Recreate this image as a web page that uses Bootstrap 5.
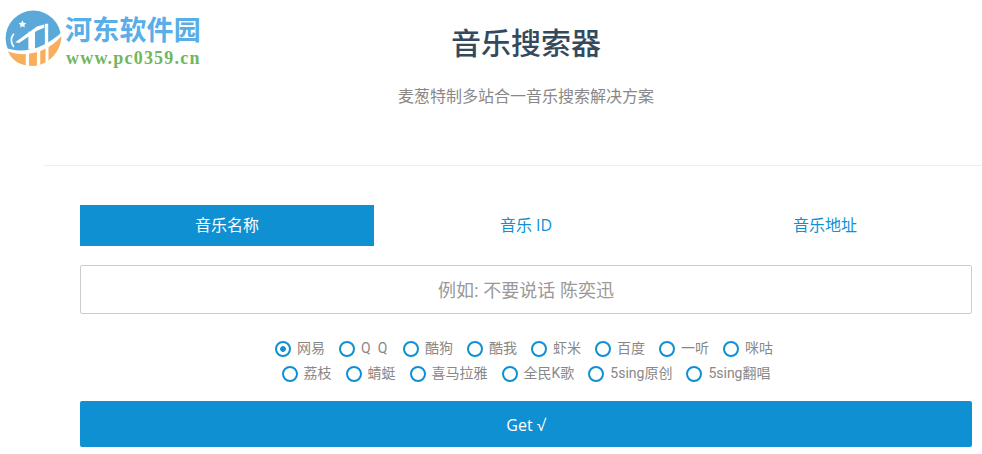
<!DOCTYPE html>
<html lang="zh-CN">
<head>
    <meta charset="UTF-8">
    <meta name="viewport" content="width=device-width, initial-scale=1.0">
    <title>音乐搜索器</title>
    <link rel="stylesheet" href="https://cdn.jsdelivr.net/npm/bootstrap@5.3.0/dist/css/bootstrap.min.css">
    <style>
        html, body {
            overflow: hidden;
        }
        body {
            font-family: "Open Sans", "Noto Sans CJK SC", sans-serif;
            color: #888;
            background: #fff;
        }
        .site-logo {
            position: absolute;
            left: 0;
            top: 6px;
            width: 210px;
            height: 66px;
        }
        .logo-mark {
            width: 66px;
            height: 66px;
        }
        .logo-name {
            position: absolute;
            left: 65px;
            top: 4px;
            font: 700 27px/38px "Noto Sans CJK SC", sans-serif;
            letter-spacing: .2px;
            color: #5aaee8;
            white-space: nowrap;
        }
        .logo-url {
            position: absolute;
            left: 66px;
            top: 41px;
            font: 700 18px/22px "Liberation Serif", serif;
            letter-spacing: 1.2px;
            color: #6fb75e;
            white-space: nowrap;
        }
        .page-wrap {
            width: 964px;
            margin-left: 44px;
        }
        .page-head {
            height: 166px;
            padding-top: 19px;
            border-bottom: 1px solid #eee;
            text-align: center;
        }
        .page-head h1 {
            font: 500 30px/44px "Noto Sans CJK SC", sans-serif;
            color: #34495e;
            margin: 0 0 20px;
        }
        .page-head p {
            font: 400 16px/24px "Noto Sans CJK SC", sans-serif;
            color: #888;
            margin: 0;
        }
        .search-box {
            padding: 39px 36px 0;
        }
        .mode-tabs {
            gap: 5px;
        }
        .mode-tabs .nav-link {
            flex: 1 1 0;
            height: 41px;
            padding: 0;
            line-height: 41px;
            font-size: 16px;
            border-radius: 0;
            color: #0f90d2;
        }
        .mode-tabs .nav-link.active {
            background: #0f90d2;
            color: #fff;
        }
        .song-input {
            height: 49px;
            margin-top: 19px;
            border: 1px solid #ccc;
            border-radius: 2px;
            font-size: 18px;
            text-align: center;
            color: #888;
        }
        .song-input::placeholder {
            color: #999;
            opacity: 1;
        }
        .source-list {
            margin-top: 22px;
            font-family: Roboto, "Noto Sans CJK SC", sans-serif;
            font-size: 14px;
            line-height: 25px;
        }
        .source-row {
            gap: 14px;
        }
        .source-item {
            gap: 6px;
            margin: 0;
            white-space: nowrap;
        }
        .qq-label {
            letter-spacing: 1.8px;
        }
        .source-radio {
            appearance: none;
            width: 16px;
            height: 16px;
            margin: 0;
            border: 2px solid #0f90d2;
            border-radius: 50%;
            background: #fff;
        }
        .source-radio:checked {
            background: radial-gradient(circle, #0f90d2 0 2.5px, #fff 3.2px);
        }
        .get-btn {
            height: 46px;
            margin-top: 15px;
            padding-top: 8px;
            border: 0;
            border-radius: 2px;
            background: #0f90d2;
            color: #fff;
            font-size: 16px;
        }
    </style>
</head>
<body>
    <!-- 水印 -->
    <div class="site-logo">
        <svg class="logo-mark" viewBox="0 0 200 200">
            <circle cx="101" cy="98" r="84" fill="#5aa9da"/>
            <path d="M10 124C60 146 130 136 192 74V200H10z" fill="#fff"/>
            <path d="M24 137C70 156 140 146 186 92 186 140 142 182 100 182 62 182 36 165 24 137z" fill="#f9ae5c"/>
            <path d="M42 84C32 96 32 110 42 124" fill="none" stroke="#fff" stroke-width="5"/>
            <path d="M46 110 112 62 134 56V66L112 75 58 112z" fill="#fff"/>
            <path d="M86 78H106V132H86zM136 54H146V128H136z" fill="#fff"/>
            <path d="M78 140H88V184H78zM112 136H122V184H112zM138 124H147V184H138z" fill="#fff"/>
            <path d="M68 44l3.500 7 8 1-5.800 5.400 1.500 7.600-7.200-3.800-7.200 3.800 1.500-7.600-5.800-5.400 8-1z" fill="#fff"/>
        </svg>
        <div class="logo-name">河东软件园</div>
        <div class="logo-url">www.pc0359.cn</div>
    </div>

    <div class="page-wrap">
        <div class="page-head">
            <h1>音乐搜索器</h1>
            <p>麦葱特制多站合一音乐搜索解决方案</p>
        </div>

        <form class="search-box">
            <ul class="nav mode-tabs text-center">
                <li class="nav-link active">音乐名称</li>
                <li class="nav-link">音乐 ID</li>
                <li class="nav-link">音乐地址</li>
            </ul>

            <input type="text" class="form-control song-input" placeholder="例如: 不要说话 陈奕迅">

            <div class="source-list">
                <div class="d-flex justify-content-center source-row pe-1">
                    <label class="d-flex align-items-center source-item"><input class="source-radio" type="radio" name="source" checked>网易</label>
                    <label class="d-flex align-items-center source-item"><input class="source-radio" type="radio" name="source"><span class="qq-label">Q Q</span></label>
                    <label class="d-flex align-items-center source-item"><input class="source-radio" type="radio" name="source">酷狗</label>
                    <label class="d-flex align-items-center source-item"><input class="source-radio" type="radio" name="source">酷我</label>
                    <label class="d-flex align-items-center source-item"><input class="source-radio" type="radio" name="source">虾米</label>
                    <label class="d-flex align-items-center source-item"><input class="source-radio" type="radio" name="source">百度</label>
                    <label class="d-flex align-items-center source-item"><input class="source-radio" type="radio" name="source">一听</label>
                    <label class="d-flex align-items-center source-item"><input class="source-radio" type="radio" name="source">咪咕</label>
                </div>
                <div class="d-flex justify-content-center source-row">
                    <label class="d-flex align-items-center source-item"><input class="source-radio" type="radio" name="source">荔枝</label>
                    <label class="d-flex align-items-center source-item"><input class="source-radio" type="radio" name="source">蜻蜓</label>
                    <label class="d-flex align-items-center source-item"><input class="source-radio" type="radio" name="source">喜马拉雅</label>
                    <label class="d-flex align-items-center source-item"><input class="source-radio" type="radio" name="source">全民K歌</label>
                    <label class="d-flex align-items-center source-item"><input class="source-radio" type="radio" name="source">5sing原创</label>
                    <label class="d-flex align-items-center source-item"><input class="source-radio" type="radio" name="source">5sing翻唱</label>
                </div>
            </div>

            <button type="button" class="btn w-100 get-btn">Get √</button>
        </form>
    </div>
</body>
</html>
